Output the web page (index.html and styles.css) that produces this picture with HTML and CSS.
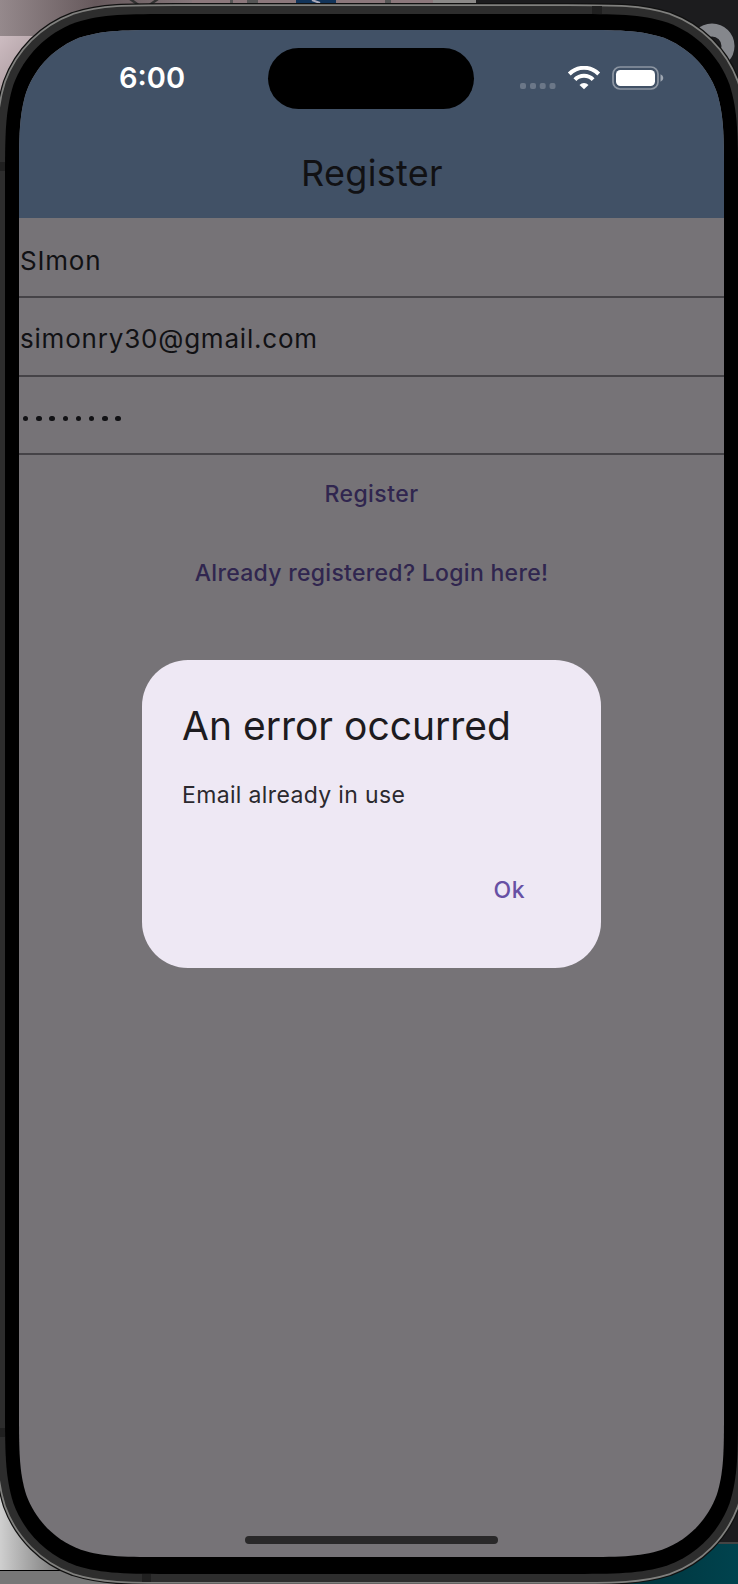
FILE: index.html
```
<!DOCTYPE html>
<html lang="en">
<head>
    <meta charset="UTF-8">
    <meta name="viewport" content="width=device-width, initial-scale=1.0">
    <title>Register</title>
    <link rel="stylesheet" href="styles.css">
</head>
<body>
    <!-- desktop behind the simulator and the phone body -->
    <svg class="device" width="738" height="1584" viewBox="0 0 738 1584">
        <defs>
            <linearGradient id="pink" x1="0" y1="0" x2="1" y2="1">
                <stop offset="0" stop-color="#cdbcc1"/>
                <stop offset="1" stop-color="#8f8084"/>
            </linearGradient>
            <linearGradient id="mauve" x1="0" y1="0" x2="1" y2="0">
                <stop offset="0" stop-color="#95898c"/>
                <stop offset="0.5" stop-color="#66595c"/>
                <stop offset="1" stop-color="#85767a"/>
            </linearGradient>
            <linearGradient id="grey" x1="0" y1="0" x2="1" y2="0">
                <stop offset="0" stop-color="#cfcfcf"/>
                <stop offset="1" stop-color="#777"/>
            </linearGradient>
            <linearGradient id="teal" x1="0" y1="0" x2="1" y2="0">
                <stop offset="0" stop-color="#001f24"/>
                <stop offset="1" stop-color="#00434e"/>
            </linearGradient>
            <path id="body" d="M5 185.2C5 135.9 5 111.3 13.4 84.7C23.9 55.8 46.8 32.9 75.7 22.4C102.3 14 126.9 14 176.2 14H566.8C616.1 14 640.7 14 667.3 22.4C696.2 32.9 719.1 55.8 729.6 84.7C738 111.3 738 135.9 738 185.2V1402.8C738 1452.1 738 1476.7 729.6 1503.3C719.1 1532.2 696.2 1555.1 667.3 1565.6C640.7 1574 616.1 1574 566.8 1574H176.2C126.9 1574 102.3 1574 75.7 1565.6C46.8 1555.1 23.9 1532.2 13.4 1503.3C5 1476.7 5 1452.1 5 1402.8Z"/>
        </defs>
        <rect width="738" height="1584" fill="#1c1c1e"/>
        <rect width="192" height="36" fill="url(#mauve)"/>
        <rect y="36" width="60" height="70" fill="url(#pink)"/>
        <rect x="192" width="241" height="5" fill="#8b777b"/>
        <path d="M130 -1l10 7M158 -1l-10 7" stroke="#333" stroke-width="2.500"/>
        <rect x="230" width="3" height="4" fill="#555"/>
        <rect x="247" width="11" height="4" fill="#555"/>
        <rect x="296" width="40" height="4" fill="#12345a"/>
        <path d="M312 0l8 3" stroke="#aab" stroke-width="2"/>
        <rect x="385" width="6" height="4" fill="#555"/>
        <rect x="433" width="43" height="4" fill="#8b8988"/>
        <circle cx="712" cy="46" r="16" fill="none" stroke="#85878c" stroke-width="13"/>
        <rect y="1480" width="60" height="90" fill="url(#grey)"/>
        <rect y="1570" width="480" height="14" fill="#777"/>
        <rect y="1570" width="60" height="1" fill="#000"/>
        <rect x="480" y="1544" width="258" height="40" fill="url(#teal)"/>
        <rect x="700" y="1542" width="38" height="2" fill="#444"/>

        <use href="#body" class="edge"/>
        <use href="#body" class="rim"/>
        <use href="#body" class="side"/>
        <use href="#body" class="bezel"/>
        <g fill="#202020">
            <rect y="162" width="5" height="9"/>
            <rect y="1428" width="5" height="9"/>
            <rect x="592" y="6" width="10" height="8"/>
            <rect x="142" y="1574" width="9" height="8"/>
        </g>
    </svg>

    <div class="screen">
        <header class="app-bar">
            <div class="status-bar">
                <span class="time">6:00</span>
                <div class="island"></div>
                <svg class="status-icons" width="144" height="26" viewBox="0 0 144 26">
                    <g fill="#fff" opacity="0.22">
                        <rect x="0" y="17" width="6" height="6" rx="2"/>
                        <rect x="10" y="17" width="6" height="6" rx="2"/>
                        <rect x="19.700" y="17" width="6" height="6" rx="2"/>
                        <rect x="29.500" y="17" width="6" height="6" rx="2"/>
                    </g>
                    <g fill="none" stroke="#fff" stroke-width="4">
                        <path d="M49.300 8A20.500 20.500 0 0 1 78.700 8"/>
                        <path d="M54.900 13.700A12.600 12.600 0 0 1 73.100 13.700"/>
                    </g>
                    <path d="M64 23.300l-4.500-4.400a6.300 6.300 0 0 1 9 0z" fill="#fff"/>
                    <rect x="93" y="1" width="45" height="22" rx="7" fill="none" stroke="#fff" stroke-opacity="0.4" stroke-width="1.700"/>
                    <rect x="96" y="4" width="39" height="16" rx="4.500" fill="#fff"/>
                    <path d="M140.500 8.300q2.800 1 2.800 3.700t-2.800 3.700z" fill="#fff" opacity="0.5"/>
                </svg>
            </div>
            <h1 class="title">Register</h1>
        </header>

        <form class="register-form">
            <div class="field">SImon</div>
            <div class="field">simonry30@gmail.com</div>
            <div class="field password"><i></i><i></i><i></i><i></i><i></i><i></i><i></i><i></i></div>
            <button type="button" class="text-button">Register</button>
            <button type="button" class="text-button login-link">Already registered? Login here!</button>
        </form>

        <div class="dialog">
            <h2>An error occurred</h2>
            <p>Email already in use</p>
            <button type="button" class="ok-button">Ok</button>
        </div>
        <div class="home-indicator"></div>
    </div>
</body>
</html>
```

FILE: styles.css
```
* {
    box-sizing: border-box;
}
body {
    margin: 0;
    width: 738px;
    height: 1584px;
    padding: 30px 14px 27px 19px;
    position: relative;
    overflow: hidden;
    background-color: #1c1c1e;
    font-family: Inter, Roboto, sans-serif;
    font-weight: 370;
    font-feature-settings: "cv05" 0;
}
.device {
    position: absolute;
    top: 0;
    left: 0;
}
.edge, .rim, .side {
    fill: none;
    stroke: #111;
    stroke-width: 22px;
}
.rim {
    stroke: #80807e;
    stroke-width: 19.5px;
}
.side {
    stroke: #2d2d2d;
    stroke-width: 16px;
}
.bezel {
    fill: #000;
}
.screen {
    position: relative;
    width: 705px;
    height: 1527px;
    background-color: #767377;
    clip-path: path("M0 149.8C0 106.7 0 85.1 7.3 61.9C16.6 36.5 36.5 16.6 61.9 7.3C85.1 0 106.7 0 149.8 0H555.2C598.3 0 619.9 0 643.1 7.3C668.5 16.6 688.4 36.5 697.7 61.9C705 85.1 705 106.7 705 149.8V1377.2C705 1420.3 705 1441.9 697.7 1465.1C688.4 1490.5 668.5 1510.4 643.1 1519.7C619.9 1527 598.3 1527 555.2 1527H149.8C106.7 1527 85.1 1527 61.9 1519.7C36.5 1510.4 16.6 1490.5 7.3 1465.1C0 1441.9 0 1420.3 0 1377.2Z");
}
.app-bar {
    height: 188px;
    padding-top: 18px;
    background-color: #415166;
}
.status-bar {
    display: flex;
    height: 61px;
    padding-left: 100px;
}
.time {
    width: 149px;
    font-size: 29px;
    font-weight: 600;
    line-height: 60px;
    color: #fff;
}
.island {
    width: 206px;
    height: 61px;
    border-radius: 31px;
    background-color: #000;
}
.status-icons {
    margin: 17.5px 0 0 45.5px;
}
.title {
    margin: 41px 0 0 1px;
    font-size: 36px;
    font-weight: 370;
    line-height: 46px;
    text-align: center;
    letter-spacing: 0.3px;
    color: #111114;
}
.register-form {
    display: flex;
    flex-direction: column;
    padding-top: 1.5px;
}
.field {
    height: 78.5px;
    padding: 6px 1px 0;
    border-bottom: 2px solid #454347;
    font-size: 26px;
    line-height: 70px;
    letter-spacing: 0.8px;
    color: #111114;
}
.password {
    display: flex;
    align-items: center;
    gap: 7.8px;
    padding: 7px 4px 0;
}
.password i {
    width: 5.4px;
    height: 5.4px;
    border-radius: 50%;
    background-color: #111114;
}
.text-button, .ok-button {
    height: 78.5px;
    padding: 0;
    border: none;
    background: none;
    font: 480 23px Inter, Roboto, sans-serif;
    letter-spacing: 0.45px;
    color: #30264f;
}
.login-link {
    letter-spacing: 0.3px;
}
.dialog {
    position: absolute;
    top: 630px;
    left: 123px;
    width: 459px;
    height: 308px;
    padding: 40px 40px 0;
    display: flex;
    flex-direction: column;
    border-radius: 46px;
    background-color: #eee8f4;
}
.dialog h2 {
    margin: 0;
    font-size: 39px;
    font-weight: 370;
    line-height: 52px;
    white-space: nowrap;
    color: #1d1b20;
}
.dialog p {
    margin: 27px 0 0;
    font-size: 23px;
    line-height: 33px;
    letter-spacing: 0.35px;
    color: #2b292e;
}
.dialog .ok-button {
    align-self: flex-end;
    margin: 38.5px 36px 0 0;
    color: #6750a4;
}
.home-indicator {
    position: absolute;
    bottom: 13px;
    left: 226px;
    width: 253px;
    height: 8px;
    border-radius: 4px;
    background-color: #292829;
}
```
